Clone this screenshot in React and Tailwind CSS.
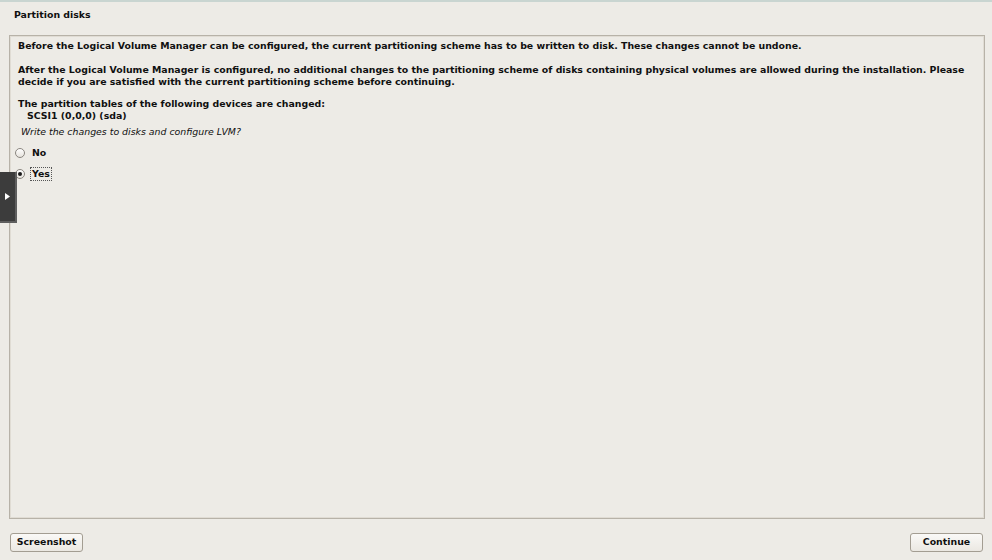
import React, { useState } from 'react';

const font = { fontFamily: '"DejaVu Sans", "Liberation Sans", sans-serif' };

function Radio({ checked }) {
  return (
    <span className="inline-flex items-center justify-center w-[10px] h-[10px] rounded-full border border-[#8a8680] bg-gradient-to-b from-[#ffffff] to-[#e6e3dd] shrink-0">
      {checked && <span className="w-[4px] h-[4px] rounded-full bg-[#1a1a1a]" />}
    </span>
  );
}

export default function App() {
  const [choice, setChoice] = useState('yes');

  return (
    <div className="relative w-[992px] h-[560px] bg-[#edebe6] text-[#101010] flex flex-col border-t-2 border-t-[#c9d5d1] overflow-hidden" style={font}>
      <div className="h-[33px] pt-[7px] pl-[14px] text-[9.4px] leading-[12px] font-bold">Partition disks</div>

      <div className="mx-[9px] w-[976px] h-[484px] border border-[#b7b2a8] shadow-[inset_0_0_0_1px_#e0dcd4] px-[8px] pt-[4px] text-[9.4px] leading-[12px]">
        <p className="font-bold">Before the Logical Volume Manager can be configured, the current partitioning scheme has to be written to disk. These changes cannot be undone.</p>
        <p className="font-bold mt-[12px]">After the Logical Volume Manager is configured, no additional changes to the partitioning scheme of disks containing physical volumes are allowed during the installation. Please decide if you are satisfied with the current partitioning scheme before continuing.</p>
        <p className="font-bold mt-[10px]">The partition tables of the following devices are changed:</p>
        <p className="font-bold pl-[9px]">SCSI1 (0,0,0) (sda)</p>
        <p className="italic pl-[3px] mt-[4px] font-normal">Write the changes to disks and configure LVM?</p>

        <div className="flex flex-col mt-[4px] -ml-[3px]">
          <label className="flex items-center gap-[6px] h-[21px] cursor-default" onClick={() => setChoice('no')}>
            <Radio checked={choice === 'no'} />
            <span className={`font-bold px-[1px] ${choice === 'no' ? 'outline outline-1 outline-dotted outline-[#555]' : ''}`}>No</span>
          </label>
          <label className="flex items-center gap-[6px] h-[21px] cursor-default" onClick={() => setChoice('yes')}>
            <Radio checked={choice === 'yes'} />
            <span className={`font-bold px-[1px] ${choice === 'yes' ? 'outline outline-1 outline-dotted outline-[#555]' : ''}`}>Yes</span>
          </label>
        </div>
      </div>

      <div className="flex justify-between items-center px-[10px] mt-[14px]">
        <button className="h-[19px] w-[73px] rounded-[3px] border border-[#a39d92] bg-gradient-to-b from-[#faf9f7] to-[#ebe8e2] text-[9.4px] font-bold" style={font}>Screenshot</button>
        <button className="h-[19px] w-[73px] rounded-[3px] border border-[#a39d92] bg-gradient-to-b from-[#faf9f7] to-[#ebe8e2] text-[9.4px] font-bold mr-[-1px]" style={font}>Continue</button>
      </div>

      <div className="absolute left-0 top-[170px] w-[17px] h-[51px] bg-[#5e5e5e] flex">
        <div className="w-[15px] h-[49px] bg-[#3c3c3c] flex items-center justify-center">
          <svg width="5" height="7" viewBox="0 0 5 7"><path d="M0 0 L5 3.5 L0 7 Z" fill="#ffffff" /></svg>
        </div>
      </div>
    </div>
  );
}
